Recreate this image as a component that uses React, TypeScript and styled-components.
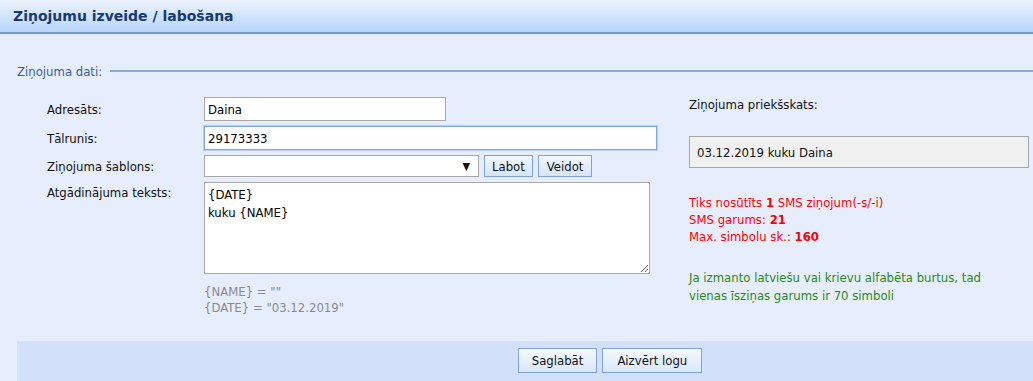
import styled, { createGlobalStyle } from 'styled-components';

const GlobalStyle = createGlobalStyle`
  html, body {
    margin: 0;
    padding: 0;
    background: #e6eefd;
  }
  body {
    font-family: 'DejaVu Sans Condensed', 'Liberation Sans', sans-serif;
    font-size: 13px;
    color: #111;
  }
`;

const Page = styled.div`
  width: 1033px;
  height: 381px;
  overflow: hidden;
`;

const Header = styled.div`
  height: 32px;
  display: flex;
  align-items: center;
  padding-left: 13px;
  background: linear-gradient(#edf4fe, #b6d4fa);
  border-bottom: 2px solid #7597d3;
`;

const Title = styled.h1`
  margin: 0;
  font-family: 'DejaVu Sans', sans-serif;
  font-size: 14px;
  font-weight: bold;
  color: #17396f;
`;

const Legend = styled.div`
  display: flex;
  align-items: center;
  gap: 8px;
  margin: 30px 0 0 17px;
  color: #3d5d96;
`;

const LegendLine = styled.div`
  flex: 1;
  height: 2px;
  background: #8eaad9;
  margin-top: -2px;
`;

const Body = styled.div`
  display: flex;
  padding: 18px 0 0 47px;
  height: 244px;
`;

const FormGrid = styled.div`
  display: grid;
  grid-template-columns: 157px auto;
  row-gap: 5px;
  align-items: center;
  width: 642px;
  align-content: start;
`;

const Label = styled.label<{ $top?: boolean }>`
  align-self: ${(p) => (p.$top ? 'start' : 'center')};
  padding-top: ${(p) => (p.$top ? '3px' : '0')};
`;

const TextInput = styled.input<{ $width: number; $focus?: boolean }>`
  box-sizing: border-box;
  width: ${(p) => p.$width}px;
  height: 24px;
  padding: 0 3px;
  font: inherit;
  color: #000;
  background: #fff;
  border: 1px solid ${(p) => (p.$focus ? '#7aa7e6' : '#a8a8a8')};
  box-shadow: ${(p) => (p.$focus ? '0 0 0 1px #b6d1f5' : 'none')};
  outline: none;
`;

const SelectRow = styled.div`
  display: flex;
  align-items: center;
  gap: 5px;
`;

const FakeSelect = styled.div`
  box-sizing: border-box;
  width: 275px;
  height: 22px;
  background: #fff;
  border: 1px solid #a8a8a8;
  display: flex;
  align-items: center;
  justify-content: flex-end;
  padding-right: 8px;
  font-size: 11px;
`;

const SmallButton = styled.button<{ $pad: number }>`
  box-sizing: border-box;
  height: 22px;
  padding: 0 ${(p) => p.$pad}px;
  font: inherit;
  color: #111;
  background: linear-gradient(#f4f8fe, #d5e5fb);
  border: 1px solid #7ea3da;
  border-radius: 0;
`;

const TextArea = styled.textarea`
  box-sizing: border-box;
  width: 446px;
  height: 92px;
  padding: 3px 3px;
  font: inherit;
  line-height: 18px;
  color: #000;
  background: #fff;
  border: 1px solid #a8a8a8;
  outline: none;
`;

const Hints = styled.div`
  grid-column: 2;
  color: #8a8a8a;
  line-height: 16px;
  padding-top: 5px;
`;

const Side = styled.div`
  width: 340px;
`;

const SideTitle = styled.div`
  height: 16px;
`;

const Preview = styled.div`
  box-sizing: border-box;
  margin-top: 23px;
  height: 32px;
  display: flex;
  align-items: center;
  padding-left: 7px;
  background: #f0f0f0;
  border: 1px solid #a8a8a8;
`;

const Stats = styled.div`
  margin-top: 26px;
  color: #ff0000;
  line-height: 17px;
`;

const Notice = styled.div`
  margin-top: 24px;
  color: #2a8a12;
  line-height: 18px;
`;

const Footer = styled.div`
  margin-left: 17px;
  height: 45px;
  background: #d2e1f9;
  display: flex;
  justify-content: center;
  padding: 7px 0 0 170px;
  gap: 5px;
  box-sizing: border-box;
`;

const FooterButton = styled.button<{ $pad: number }>`
  height: 25px;
  padding: 0 ${(p) => p.$pad}px;
  font: inherit;
  color: #111;
  background: linear-gradient(#f6f9fe, #d8e7fb);
  border: 1px solid #7ea3da;
  border-radius: 0;
`;

export default function App() {
  return (
    <Page>
      <GlobalStyle />
      <Header>
        <Title>Ziņojumu izveide / labošana</Title>
      </Header>
      <Legend>
        Ziņojuma dati:
        <LegendLine />
      </Legend>
      <Body>
        <FormGrid>
          <Label>Adresāts:</Label>
          <TextInput $width={242} defaultValue="Daina" />
          <Label>Tālrunis:</Label>
          <TextInput $width={453} $focus defaultValue="29173333" />
          <Label>Ziņojuma šablons:</Label>
          <SelectRow>
            <FakeSelect>▼</FakeSelect>
            <SmallButton $pad={7}>Labot</SmallButton>
            <SmallButton $pad={8}>Veidot</SmallButton>
          </SelectRow>
          <Label $top>Atgādinājuma teksts:</Label>
          <TextArea defaultValue={'{DATE}\nkuku {NAME}'} />
          <Hints>
            {'{NAME} = ""'}
            <br />
            {'{DATE} = "03.12.2019"'}
          </Hints>
        </FormGrid>
        <Side>
          <SideTitle>Ziņojuma priekšskats:</SideTitle>
          <Preview>03.12.2019 kuku Daina</Preview>
          <Stats>
            Tiks nosūtīts <b>1</b> SMS ziņojum(-s/-i)
            <br />
            SMS garums: <b>21</b>
            <br />
            Max. simbolu sk.: <b>160</b>
          </Stats>
          <Notice>
            Ja izmanto latviešu vai krievu alfabēta burtus, tad
            <br />
            vienas īsziņas garums ir 70 simboli
          </Notice>
        </Side>
      </Body>
      <Footer>
        <FooterButton $pad={13}>Saglabāt</FooterButton>
        <FooterButton $pad={14}>Aizvērt logu</FooterButton>
      </Footer>
    </Page>
  );
}
